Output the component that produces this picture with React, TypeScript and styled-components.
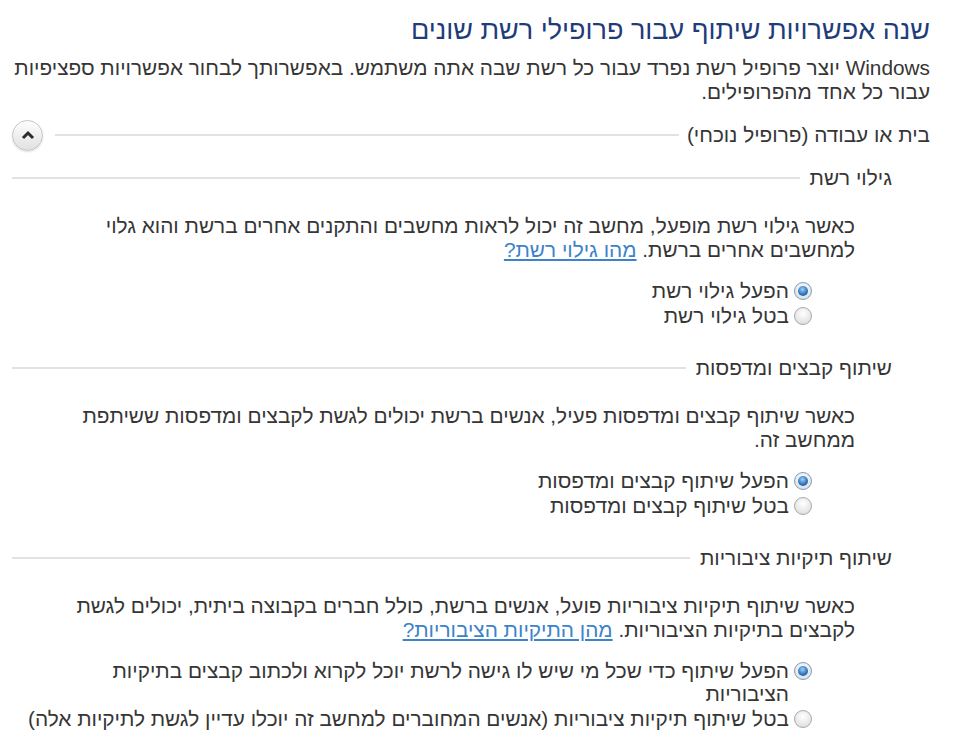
import React from "react";
import styled, { createGlobalStyle, css } from "styled-components";

const GlobalStyle = createGlobalStyle`
  html, body {
    margin: 0;
    background: #ffffff;
  }
  body {
    font-family: "Liberation Sans", "DejaVu Sans", sans-serif;
  }
`;

const Page = styled.div`
  direction: rtl;
  padding: 14px 26px 0 10px;
  color: #363636;
  font-size: 20.8px;
  line-height: 24px;
`;

const Title = styled.h1`
  margin: 0;
  font-size: 27px;
  font-weight: normal;
  line-height: 32px;
  color: #1f3c7a;
`;

const Intro = styled.p`
  margin: 10px 0 0;
  white-space: nowrap;
`;

const ProfileHeader = styled.div`
  display: flex;
  align-items: center;
  gap: 8px;
  margin-top: 15px;
  height: 32px;
  padding-left: 2px;
`;

const HeaderLabel = styled.span`
  white-space: nowrap;
`;

const Rule = styled.div`
  flex: 1;
  height: 2px;
  background: #e2e2e2;
`;

const CollapseButton = styled.button`
  width: 31px;
  height: 31px;
  padding: 0;
  border-radius: 50%;
  border: 1px solid #c4c4c4;
  background: linear-gradient(#fdfdfd, #e1e1e1);
  box-shadow: inset 0 1px 0 #ffffff, 0 1px 2px rgba(0, 0, 0, 0.12);
  display: flex;
  align-items: center;
  justify-content: center;
  margin-right: 4px;
`;

const Section = styled.section<{ first?: boolean }>`
  padding: 0 38px 0 2px;
  margin-top: ${(p) => (p.first ? "15px" : "29px")};
`;

const SectionHeader = styled.div`
  display: flex;
  align-items: center;
  gap: 10px;
  height: 24px;
`;

const SectionBody = styled.div`
  padding-right: 37px;
`;

const Para = styled.p`
  margin: 24px 0 0;
  white-space: nowrap;
`;

const Link = styled.a`
  color: #3d83c9;
  text-decoration: underline;
  cursor: pointer;
`;

const RadioGroup = styled.div`
  margin-top: 17px;
  padding-right: 43px;
  display: flex;
  flex-direction: column;
  gap: 2px;
`;

const RadioRow = styled.label`
  display: flex;
  align-items: flex-start;
  gap: 5px;
  line-height: 23px;
  white-space: nowrap;
`;

const RadioCircle = styled.span<{ checked?: boolean }>`
  flex: none;
  width: 16px;
  height: 16px;
  margin-top: 3px;
  border-radius: 50%;
  border: 1px solid #a9a9a9;
  background: radial-gradient(circle at 50% 35%, #ffffff, #e4e4e4 70%, #d2d2d2);
  display: flex;
  align-items: center;
  justify-content: center;
  ${(p) =>
    p.checked &&
    css`
      border-color: #7a9cc4;
      &::after {
        content: "";
        width: 10px;
        height: 10px;
        border-radius: 50%;
        background: radial-gradient(circle at 45% 35%, #9fd0f5, #2f78c1 55%, #143f7a);
      }
    `}
`;

type Option = { label: React.ReactNode; checked?: boolean };

const Radios = ({ options }: { options: Option[] }) => (
  <RadioGroup>
    {options.map((o, i) => (
      <RadioRow key={i}>
        <RadioCircle checked={o.checked} />
        <span>{o.label}</span>
      </RadioRow>
    ))}
  </RadioGroup>
);

const Chevron = () => (
  <svg width="16" height="12" viewBox="0 0 16 12">
    <path d="M3 9 L8 4 L13 9" fill="none" stroke="#2b2b2b" strokeWidth="3" />
  </svg>
);

export default function App() {
  return (
    <>
      <GlobalStyle />
      <Page>
        <Title>שנה אפשרויות שיתוף עבור פרופילי רשת שונים</Title>
        <Intro>
          Windows יוצר פרופיל רשת נפרד עבור כל רשת שבה אתה משתמש. באפשרותך לבחור אפשרויות ספציפיות
          <br />
          עבור כל אחד מהפרופילים.
        </Intro>

        <ProfileHeader>
          <HeaderLabel>בית או עבודה (פרופיל נוכחי)</HeaderLabel>
          <Rule />
          <CollapseButton aria-label="כווץ">
            <Chevron />
          </CollapseButton>
        </ProfileHeader>

        <Section first>
          <SectionHeader>
            <HeaderLabel>גילוי רשת</HeaderLabel>
            <Rule />
          </SectionHeader>
          <SectionBody>
            <Para>
              כאשר גילוי רשת מופעל, מחשב זה יכול לראות מחשבים והתקנים אחרים ברשת והוא גלוי
              <br />
              למחשבים אחרים ברשת. <Link>מהו גילוי רשת?</Link>
            </Para>
            <Radios
              options={[
                { label: "הפעל גילוי רשת", checked: true },
                { label: "בטל גילוי רשת" },
              ]}
            />
          </SectionBody>
        </Section>

        <Section>
          <SectionHeader>
            <HeaderLabel>שיתוף קבצים ומדפסות</HeaderLabel>
            <Rule />
          </SectionHeader>
          <SectionBody>
            <Para>
              כאשר שיתוף קבצים ומדפסות פעיל, אנשים ברשת יכולים לגשת לקבצים ומדפסות ששיתפת
              <br />
              ממחשב זה.
            </Para>
            <Radios
              options={[
                { label: "הפעל שיתוף קבצים ומדפסות", checked: true },
                { label: "בטל שיתוף קבצים ומדפסות" },
              ]}
            />
          </SectionBody>
        </Section>

        <Section>
          <SectionHeader>
            <HeaderLabel>שיתוף תיקיות ציבוריות</HeaderLabel>
            <Rule />
          </SectionHeader>
          <SectionBody>
            <Para>
              כאשר שיתוף תיקיות ציבוריות פועל, אנשים ברשת, כולל חברים בקבוצה ביתית, יכולים לגשת
              <br />
              לקבצים בתיקיות הציבוריות. <Link>מהן התיקיות הציבוריות?</Link>
            </Para>
            <Radios
              options={[
                {
                  label: (
                    <>
                      הפעל שיתוף כדי שכל מי שיש לו גישה לרשת יוכל לקרוא ולכתוב קבצים בתיקיות
                      <br />
                      הציבוריות
                    </>
                  ),
                  checked: true,
                },
                { label: "בטל שיתוף תיקיות ציבוריות (אנשים המחוברים למחשב זה יוכלו עדיין לגשת לתיקיות אלה)" },
              ]}
            />
          </SectionBody>
        </Section>
      </Page>
    </>
  );
}
